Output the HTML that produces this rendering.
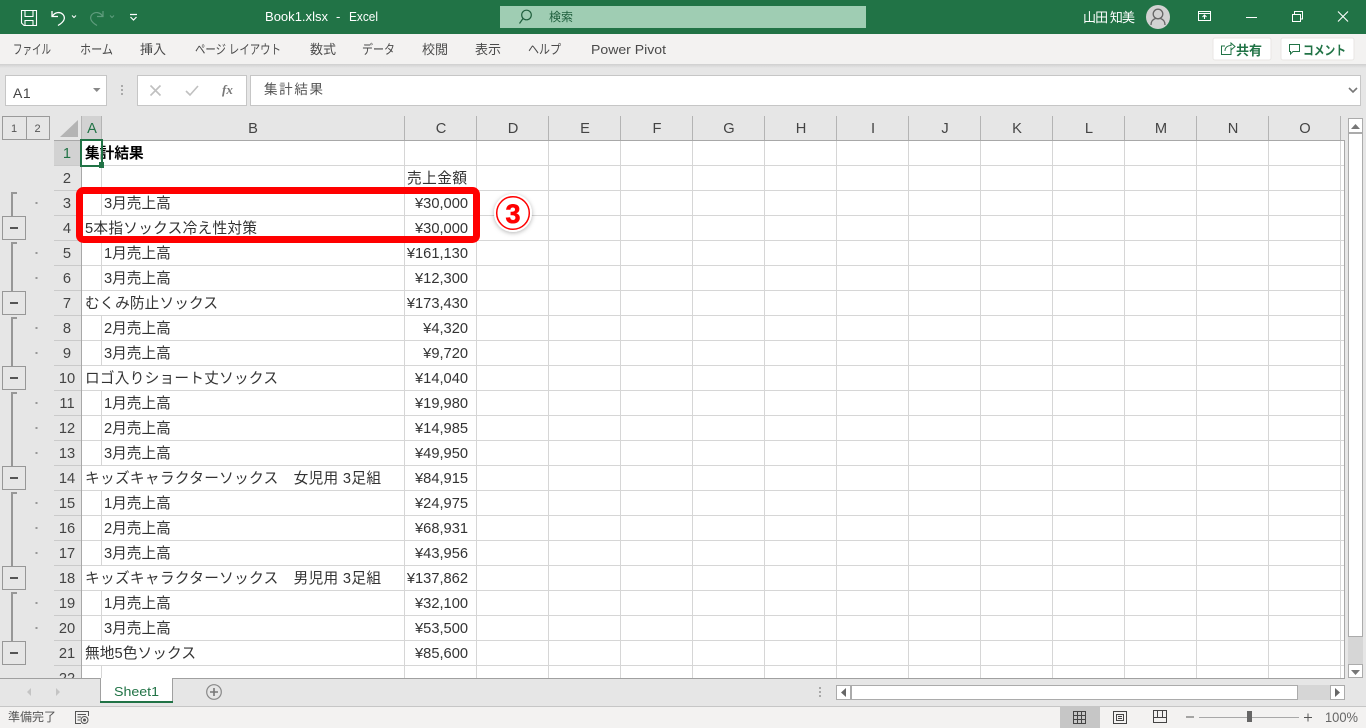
<!DOCTYPE html>
<html lang="ja"><head><meta charset="utf-8"><title>Book1.xlsx - Excel</title>
<style>
html,body{margin:0;padding:0;background:#e6e6e6;overflow:hidden}
svg{display:block;font-family:"Liberation Sans","Noto Sans CJK JP",sans-serif}
.c{font-size:14.67px;fill:#333}
.r{font-size:14.67px;fill:#333;text-anchor:end}
.h{font-size:14.67px;fill:#444;text-anchor:middle}
.t{font-size:13px;fill:#4a4a4a}
.cr{shape-rendering:crispEdges}
</style></head><body>
<svg width="1366" height="728" viewBox="0 0 1366 728" xmlns="http://www.w3.org/2000/svg">
<defs>
<linearGradient id="sh" x1="0" y1="0" x2="0" y2="1"><stop offset="0" stop-color="#cfcfcf"/><stop offset="1" stop-color="#e6e6e6"/></linearGradient>
<filter id="ds" x="-40%" y="-40%" width="180%" height="180%"><feDropShadow dx="0" dy="1" stdDeviation="2.500" flood-color="#000" flood-opacity=".3"/></filter>
</defs>
<rect width="1366" height="728" fill="#e6e6e6"/>

<!-- title bar -->
<rect width="1366" height="34" fill="#217346"/>
<g fill="none" stroke="#fff" stroke-width="1.100">
<path d="M21.500 10.500H36.500V25.500H24L21.500 23Z"/><path d="M25 10.500V16.500H33V10.500M25 25.500V20.500H33V25.500"/>
<path d="M52 11V16.500H58M52.500 16C55 12 60 11.500 63 14.500C66 18 64 22 58 25.500" stroke-width="1.300"/>
<path d="M72 15.500L74 17.500L76 15.500" stroke-width="1"/>
<path d="M130 14.500H137M130.500 17L133.500 20L136.500 17" stroke-width="1.200"/>
</g>
<g fill="none" stroke="#5f9c7d" stroke-width="1.200"><path d="M103 11V16.500H97M102.500 16C100 12 95 11.500 92 14.500C89 18 91 22 97 25.500"/><path d="M110 15.500L112 17.500L114 15.500" stroke-width="1"/></g>
<text x="265" y="21" font-size="13" fill="#fff" textLength="63" lengthAdjust="spacingAndGlyphs">Book1.xlsx</text>
<text x="336" y="21" font-size="13" fill="#fff">-</text>
<text x="349" y="21" font-size="13" fill="#fff" textLength="29" lengthAdjust="spacingAndGlyphs">Excel</text>
<rect x="500" y="6" width="366" height="22" fill="#9fcdb3"/>
<g fill="none" stroke="#1f5f3d" stroke-width="1.200"><circle cx="526.500" cy="15" r="4.800"/><path d="M523 18.500L519.500 23.500"/></g>
<text x="549" y="21" font-size="12" fill="#1f5f3d">検索</text>
<text x="1083" y="22" font-size="13" fill="#fff" textLength="52">山田 知美</text>
<circle cx="1158" cy="17" r="12" fill="#d2d2d2"/>
<g fill="none" stroke="#666" stroke-width="1.300"><circle cx="1158" cy="14" r="4.800"/><path d="M1151 25C1151 20.500 1154 19 1155.500 18.500M1165 25C1165 20.500 1162 19 1160.500 18.500"/></g>
<g fill="none" stroke="#fff" stroke-width="1.100">
<path class="cr" d="M1198.500 11.500H1210.500V20.500H1198.500ZM1198.500 13.500H1210.500"/><path d="M1204.500 19V15.500M1202.500 17L1204.500 15L1206.500 17"/>
<path class="cr" d="M1246 17.500H1257"/>
<path class="cr" d="M1292.500 14.500H1300.500V21.500H1292.500ZM1294.500 14V11.500H1302.500V19H1301"/>
<path d="M1338 11.500L1348 21.500M1348 11.500L1338 21.500"/>
</g>

<!-- ribbon tabs -->
<rect y="34" width="1366" height="30" fill="#f3f2f1"/>
<rect y="64" width="1366" height="4" fill="url(#sh)"/>
<g class="t">
<text class="t" x="13" y="54" textLength="38" lengthAdjust="spacingAndGlyphs">ファイル</text>
<text class="t" x="80" y="54" textLength="33" lengthAdjust="spacingAndGlyphs">ホーム</text>
<text class="t" x="140" y="54" textLength="26">挿入</text>
<text class="t" x="195" y="54" textLength="86" lengthAdjust="spacingAndGlyphs">ページ レイアウト</text>
<text class="t" x="310" y="54" textLength="26">数式</text>
<text class="t" x="362" y="54" textLength="33" lengthAdjust="spacingAndGlyphs">データ</text>
<text class="t" x="422" y="54" textLength="26">校閲</text>
<text class="t" x="475" y="54" textLength="26">表示</text>
<text class="t" x="528" y="54" textLength="33" lengthAdjust="spacingAndGlyphs">ヘルプ</text>
<text class="t" x="591" y="54" textLength="75" lengthAdjust="spacingAndGlyphs">Power Pivot</text>
</g>
<rect x="1213" y="38" width="58" height="22" rx="2" fill="#fff" stroke="#e8e6e4"/>
<rect x="1281" y="38" width="73" height="22" rx="2" fill="#fff" stroke="#e8e6e4"/>
<g fill="none" stroke="#217346" stroke-width="1"><path d="M1225 46H1221.500V54.500H1231V50"/><path d="M1225 51C1225 47 1228 45.500 1231 45.500V43L1235 46.500L1231 50V47.500"/><path d="M1289.500 44.500H1299.500V51.500H1293L1290.500 54V51.500H1289.500Z"/></g>
<text x="1236" y="55" font-size="13" font-weight="700" fill="#217346">共有</text>
<text x="1303" y="55" font-size="13" font-weight="700" fill="#217346" textLength="43" lengthAdjust="spacingAndGlyphs">コメント</text>

<!-- formula bar -->
<rect x="5.500" y="75.500" width="101" height="30" fill="#fff" stroke="#c6c6c6"/>
<text x="13" y="98" font-size="14" fill="#444" letter-spacing=".5">A1</text>
<path d="M93 88H100.500L96.750 92Z" fill="#888"/>
<g fill="#aaa" class="cr"><rect x="121" y="85" width="2" height="2"/><rect x="121" y="89" width="2" height="2"/><rect x="121" y="93" width="2" height="2"/></g>
<rect x="137.500" y="75.500" width="109" height="30" fill="#fff" stroke="#c6c6c6"/>
<rect x="250.500" y="75.500" width="1110" height="30" fill="#fff" stroke="#c6c6c6"/>
<g fill="none" stroke="#c0c0c0" stroke-width="1.600"><path d="M150.500 85.500L160.500 95.500M160.500 85.500L150.500 95.500"/><path d="M186 91L190 95L198 86"/></g>
<text x="222" y="94" font-family="'Liberation Serif',serif" font-style="italic" font-weight="700" font-size="13" fill="#777">fx</text>
<text x="264" y="94" font-size="13.500" fill="#555" textLength="59">集計結果</text>
<path d="M1349 88L1353 92L1357 88" fill="none" stroke="#777" stroke-width="1.600"/>

<!-- outline level buttons -->
<rect x="2.500" y="116.500" width="24" height="23" fill="#e6e6e6" stroke="#9a9a9a" class="cr"/>
<rect x="26.500" y="116.500" width="23" height="23" fill="#e6e6e6" stroke="#9a9a9a" class="cr"/>
<text x="14" y="132" font-size="11" fill="#555" text-anchor="middle">1</text>
<text x="37.500" y="132" font-size="11" fill="#555" text-anchor="middle">2</text>

<!-- grid -->
<rect x="82" y="141" width="1262" height="537" fill="#fff"/>
<rect x="81" y="116" width="21" height="24" fill="#d2d2d2"/>
<rect x="54" y="141" width="27" height="24" fill="#d2d2d2"/>
<path d="M60 137H78V120Z" fill="#b4b4b4"/>
<path class="cr" fill="none" stroke="#d6d6d6" d="M82 165.500H1344M82 190.500H1344M82 215.500H1344M82 240.500H1344M82 265.500H1344M82 290.500H1344M82 315.500H1344M82 340.500H1344M82 365.500H1344M82 390.500H1344M82 415.500H1344M82 440.500H1344M82 465.500H1344M82 490.500H1344M82 515.500H1344M82 540.500H1344M82 565.500H1344M82 590.500H1344M82 615.500H1344M82 640.500H1344M82 665.500H1344
M404.500 141V678M476.500 141V678M548.500 141V678M620.500 141V678M692.500 141V678M764.500 141V678M836.500 141V678M908.500 141V678M980.500 141V678M1052.500 141V678M1124.500 141V678M1196.500 141V678M1268.500 141V678M1340.500 141V678
M101.500 166V215M101.500 241V290M101.500 316V365M101.500 391V465M101.500 491V565M101.500 591V640M101.500 666V678"/>
<path class="cr" fill="none" stroke="#cacaca" d="M54 165.500H81M54 190.500H81M54 215.500H81M54 240.500H81M54 265.500H81M54 290.500H81M54 315.500H81M54 340.500H81M54 365.500H81M54 390.500H81M54 415.500H81M54 440.500H81M54 465.500H81M54 490.500H81M54 515.500H81M54 540.500H81M54 565.500H81M54 590.500H81M54 615.500H81M54 640.500H81M54 665.500H81"/>
<path class="cr" fill="none" stroke="#b4b4b4" d="M81.500 116V140M101.500 116V140M404.500 116V140M476.500 116V140M548.500 116V140M620.500 116V140M692.500 116V140M764.500 116V140M836.500 116V140M908.500 116V140M980.500 116V140M1052.500 116V140M1124.500 116V140M1196.500 116V140M1268.500 116V140M1340.500 116V140"/>
<path class="cr" fill="none" stroke="#a8a8a8" d="M54 140.500H1344.500V678M81.500 141V678"/>

<!-- column headers -->
<text class="h" x="92" y="133" style="fill:#217346">A</text>
<text class="h" x="253" y="133">B</text><text class="h" x="441" y="133">C</text><text class="h" x="513" y="133">D</text><text class="h" x="585" y="133">E</text><text class="h" x="657" y="133">F</text><text class="h" x="729" y="133">G</text><text class="h" x="801" y="133">H</text><text class="h" x="873" y="133">I</text><text class="h" x="945" y="133">J</text><text class="h" x="1017" y="133">K</text><text class="h" x="1089" y="133">L</text><text class="h" x="1161" y="133">M</text><text class="h" x="1233" y="133">N</text><text class="h" x="1305" y="133">O</text>

<!-- row headers -->
<text class="h" x="67" y="158" style="fill:#217346">1</text>
<text class="h" x="67" y="183">2</text><text class="h" x="67" y="208">3</text><text class="h" x="67" y="233">4</text><text class="h" x="67" y="258">5</text><text class="h" x="67" y="283">6</text><text class="h" x="67" y="308">7</text><text class="h" x="67" y="333">8</text><text class="h" x="67" y="358">9</text><text class="h" x="67" y="383">10</text><text class="h" x="67" y="408">11</text><text class="h" x="67" y="433">12</text><text class="h" x="67" y="458">13</text><text class="h" x="67" y="483">14</text><text class="h" x="67" y="508">15</text><text class="h" x="67" y="533">16</text><text class="h" x="67" y="558">17</text><text class="h" x="67" y="583">18</text><text class="h" x="67" y="608">19</text><text class="h" x="67" y="633">20</text><text class="h" x="67" y="658">21</text><text class="h" x="67" y="683">22</text>

<!-- cells -->
<text class="c" x="85" y="158" style="font-weight:700;fill:#000">集計結果</text>
<text class="c" x="407" y="183" textLength="60">売上金額</text>
<text class="c" x="104" y="208">3月売上高</text><text class="r" x="468" y="208">¥30,000</text>
<text class="c" x="85" y="233" textLength="172">5本指ソックス冷え性対策</text><text class="r" x="468" y="233">¥30,000</text>
<text class="c" x="104" y="258">1月売上高</text><text class="r" x="468" y="258">¥161,130</text>
<text class="c" x="104" y="283">3月売上高</text><text class="r" x="468" y="283">¥12,300</text>
<text class="c" x="85" y="308" textLength="133">むくみ防止ソックス</text><text class="r" x="468" y="308">¥173,430</text>
<text class="c" x="104" y="333">2月売上高</text><text class="r" x="468" y="333">¥4,320</text>
<text class="c" x="104" y="358">3月売上高</text><text class="r" x="468" y="358">¥9,720</text>
<text class="c" x="85" y="383" textLength="193">ロゴ入りショート丈ソックス</text><text class="r" x="468" y="383">¥14,040</text>
<text class="c" x="104" y="408">1月売上高</text><text class="r" x="468" y="408">¥19,980</text>
<text class="c" x="104" y="433">2月売上高</text><text class="r" x="468" y="433">¥14,985</text>
<text class="c" x="104" y="458">3月売上高</text><text class="r" x="468" y="458">¥49,950</text>
<text class="c" x="85" y="483" textLength="296">キッズキャラクターソックス　女児用 3足組</text><text class="r" x="468" y="483">¥84,915</text>
<text class="c" x="104" y="508">1月売上高</text><text class="r" x="468" y="508">¥24,975</text>
<text class="c" x="104" y="533">2月売上高</text><text class="r" x="468" y="533">¥68,931</text>
<text class="c" x="104" y="558">3月売上高</text><text class="r" x="468" y="558">¥43,956</text>
<text class="c" x="85" y="583" textLength="296">キッズキャラクターソックス　男児用 3足組</text><text class="r" x="468" y="583">¥137,862</text>
<text class="c" x="104" y="608">1月売上高</text><text class="r" x="468" y="608">¥32,100</text>
<text class="c" x="104" y="633">3月売上高</text><text class="r" x="468" y="633">¥53,500</text>
<text class="c" x="85" y="658" textLength="111">無地5色ソックス</text><text class="r" x="468" y="658">¥85,600</text>

<!-- selection -->
<rect x="81" y="140" width="21" height="26" fill="none" stroke="#217346" stroke-width="2" class="cr"/>
<rect x="99" y="162" width="5" height="6" fill="#217346" class="cr"/>

<!-- outline -->
<g class="cr" fill="#979797">
<path d="M11 192h6v2h-4V216h-2zM11 242h6v2h-4V291h-2zM11 317h6v2h-4V366h-2zM11 392h6v2h-4V466h-2zM11 492h6v2h-4V566h-2zM11 592h6v2h-4V641h-2z"/>
<rect x="35.500" y="202" width="2" height="2"/><rect x="35.500" y="252" width="2" height="2"/><rect x="35.500" y="277" width="2" height="2"/><rect x="35.500" y="327" width="2" height="2"/><rect x="35.500" y="352" width="2" height="2"/><rect x="35.500" y="402" width="2" height="2"/><rect x="35.500" y="427" width="2" height="2"/><rect x="35.500" y="452" width="2" height="2"/><rect x="35.500" y="502" width="2" height="2"/><rect x="35.500" y="527" width="2" height="2"/><rect x="35.500" y="552" width="2" height="2"/><rect x="35.500" y="602" width="2" height="2"/><rect x="35.500" y="627" width="2" height="2"/>
</g>
<g class="cr" fill="#e6e6e6" stroke="#979797">
<rect x="2.500" y="216.500" width="23" height="23"/><rect x="2.500" y="291.500" width="23" height="23"/><rect x="2.500" y="366.500" width="23" height="23"/><rect x="2.500" y="466.500" width="23" height="23"/><rect x="2.500" y="566.500" width="23" height="23"/><rect x="2.500" y="641.500" width="23" height="23"/>
</g>
<g class="cr" fill="#555"><rect x="10" y="227" width="8" height="2"/><rect x="10" y="302" width="8" height="2"/><rect x="10" y="377" width="8" height="2"/><rect x="10" y="477" width="8" height="2"/><rect x="10" y="577" width="8" height="2"/><rect x="10" y="652" width="8" height="2"/></g>

<!-- annotation -->
<rect x="79.500" y="190.500" width="397" height="49" rx="4" fill="none" stroke="#ff0000" stroke-width="7"/>
<circle cx="513" cy="213" r="19" fill="#fff" filter="url(#ds)"/>
<circle cx="513" cy="213" r="16.300" fill="none" stroke="#ff0000" stroke-width="1.500"/>
<text x="513" y="223" font-size="27" font-weight="700" fill="#ff0000" stroke="#ff0000" stroke-width=".6" text-anchor="middle" font-family="'Liberation Sans',sans-serif">3</text>

<!-- vertical scrollbar -->
<rect x="1348" y="118" width="15" height="560" fill="#d6d6d6"/>
<rect x="1348.500" y="118.500" width="14" height="14" fill="#fff" stroke="#ababab" class="cr"/>
<path d="M1351 129H1360L1355.500 124Z" fill="#777"/>
<rect x="1348.500" y="133.500" width="14" height="503" fill="#fff" stroke="#ababab" class="cr"/>
<rect x="1348.500" y="664.500" width="14" height="13" fill="#fff" stroke="#ababab" class="cr"/>
<path d="M1351 670H1360L1355.500 675Z" fill="#777"/>

<!-- tab bar -->
<rect y="678" width="1366" height="28" fill="#e6e6e6"/>
<rect x="0" y="678" width="1345" height="1" fill="#a0a0a0" class="cr"/>
<rect x="100" y="678" width="73" height="24" fill="#fff" class="cr"/>
<path class="cr" d="M100.500 678V702M172.500 678V702" stroke="#a0a0a0" fill="none"/>
<rect x="100" y="701" width="73" height="2" fill="#217346" class="cr"/>
<text x="114" y="696" font-size="13" fill="#217346" textLength="45" lengthAdjust="spacingAndGlyphs">Sheet1</text>
<path d="M31 688V696L27 692ZM56 688V696L60 692Z" fill="#c4c4c4"/>
<circle cx="214" cy="692" r="7.300" fill="none" stroke="#888" stroke-width="1.200"/>
<path d="M210 692H218M214 688V696" stroke="#777" stroke-width="1.600" fill="none"/>
<g fill="#a8a8a8" class="cr"><rect x="819" y="687" width="2" height="2"/><rect x="819" y="691" width="2" height="2"/><rect x="819" y="695" width="2" height="2"/></g>
<rect x="836" y="685" width="509" height="15" fill="#d6d6d6"/>
<rect x="836.500" y="685.500" width="14" height="14" fill="#fff" stroke="#ababab" class="cr"/>
<path d="M846 688V697L841 692.500Z" fill="#666"/>
<rect x="851.500" y="685.500" width="446" height="14" fill="#fff" stroke="#ababab" class="cr"/>
<rect x="1330.500" y="685.500" width="14" height="14" fill="#fff" stroke="#ababab" class="cr"/>
<path d="M1335 688V697L1340 692.500Z" fill="#666"/>

<!-- status bar -->
<rect y="706" width="1366" height="22" fill="#f3f2f1"/>
<rect y="706" width="1366" height="1" fill="#c6c6c6" class="cr"/>
<text x="8" y="721" font-size="12" fill="#555">準備完了</text>
<g fill="none" stroke="#555" stroke-width="1"><path d="M88.500 716V711.500H75.500V723.500H81M77.500 714.500H86M77.500 717H81M77.500 720H80"/><circle cx="84.500" cy="720" r="3.500"/></g>
<circle cx="84.500" cy="720" r="1.500" fill="#555"/>
<rect x="1060" y="707" width="40" height="21" fill="#c6c6c6"/>
<g class="cr" fill="none" stroke="#444"><path d="M1073.500 711.500H1085.500V723.500H1073.500ZM1077.500 711.500V723.500M1081.500 711.500V723.500M1073.500 715.500H1085.500M1073.500 719.500H1085.500"/>
<path d="M1113.500 711.500H1126.500V723.500H1113.500ZM1116.500 714.500H1123.500V720.500H1116.500ZM1118 716.500H1122M1118 718.500H1122"/>
<path d="M1153.500 710.500H1166.500V722.500H1153.500ZM1153.500 717.500H1166.500M1157.500 710.500V717.500M1162.500 710.500V717.500"/></g>
<path class="cr" d="M1186 717H1194M1304 717.500H1312M1308 713.500V721.500" stroke="#555" fill="none" stroke-width="1.200"/>
<rect x="1199" y="717" width="100" height="1" fill="#a8a8a8" class="cr"/>
<rect x="1247" y="711" width="5" height="11" fill="#666" class="cr"/>
<text x="1325" y="722" font-size="14" fill="#666" textLength="33" lengthAdjust="spacingAndGlyphs">100%</text>
</svg>
</body></html>
